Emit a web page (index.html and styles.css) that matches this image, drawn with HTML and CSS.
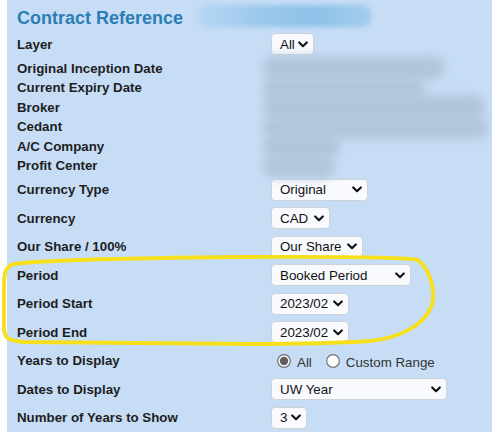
FILE: index.html
```html
<!DOCTYPE html>
<html lang="en">
<head>
<meta charset="utf-8">
<title>Contract Reference</title>
<link rel="stylesheet" href="styles.css">
</head>
<body>
<div class="page">
  <div class="panel">
    <div class="title-row">
      <h1 class="title">Contract Reference</h1>
      <span class="smudge-title"></span>
    </div>

    <div class="row row-sel">
      <div class="label">Layer</div>
      <div class="value"><div class="select w-all"><span>All</span><svg class="chev" viewBox="0 0 10 7" width="10" height="7"><path d="M1.2 1.4 L5 5.2 L8.8 1.4"/></svg></div></div>
    </div>
    <div class="row row-txt">
      <div class="label">Original Inception Date</div>
      <div class="value"><span class="smudge s-182"></span></div>
    </div>
    <div class="row row-txt">
      <div class="label">Current Expiry Date</div>
      <div class="value"><span class="smudge s-162"></span></div>
    </div>
    <div class="row row-txt">
      <div class="label">Broker</div>
      <div class="value"><span class="smudge s-222"></span></div>
    </div>
    <div class="row row-txt">
      <div class="label">Cedant</div>
      <div class="value"><span class="smudge s-225"></span></div>
    </div>
    <div class="row row-txt">
      <div class="label">A/C Company</div>
      <div class="value"><span class="smudge s-77"></span></div>
    </div>
    <div class="row row-txt">
      <div class="label">Profit Center</div>
      <div class="value"><span class="smudge s-72"></span></div>
    </div>

    <div class="row row-sel">
      <div class="label">Currency Type</div>
      <div class="value"><div class="select w-original"><span>Original</span><svg class="chev" viewBox="0 0 10 7" width="10" height="7"><path d="M1.2 1.4 L5 5.2 L8.8 1.4"/></svg></div></div>
    </div>
    <div class="row row-sel">
      <div class="label">Currency</div>
      <div class="value"><div class="select w-cad"><span>CAD</span><svg class="chev" viewBox="0 0 10 7" width="10" height="7"><path d="M1.2 1.4 L5 5.2 L8.8 1.4"/></svg></div></div>
    </div>
    <div class="row row-sel">
      <div class="label">Our Share / 100%</div>
      <div class="value"><div class="select w-share"><span>Our Share</span><svg class="chev" viewBox="0 0 10 7" width="10" height="7"><path d="M1.2 1.4 L5 5.2 L8.8 1.4"/></svg></div></div>
    </div>
    <div class="row row-sel">
      <div class="label">Period</div>
      <div class="value"><div class="select w-booked"><span>Booked Period</span><svg class="chev" viewBox="0 0 10 7" width="10" height="7"><path d="M1.2 1.4 L5 5.2 L8.8 1.4"/></svg></div></div>
    </div>
    <div class="row row-sel">
      <div class="label">Period Start</div>
      <div class="value"><div class="select w-date"><span>2023/02</span><svg class="chev" viewBox="0 0 10 7" width="10" height="7"><path d="M1.2 1.4 L5 5.2 L8.8 1.4"/></svg></div></div>
    </div>
    <div class="row row-sel">
      <div class="label">Period End</div>
      <div class="value"><div class="select w-date"><span>2023/02</span><svg class="chev" viewBox="0 0 10 7" width="10" height="7"><path d="M1.2 1.4 L5 5.2 L8.8 1.4"/></svg></div></div>
    </div>
    <div class="row row-sel">
      <div class="label">Years to Display</div>
      <div class="value">
        <div class="radios">
          <svg class="radio" viewBox="0 0 14 14" width="14" height="14"><circle cx="7" cy="7" r="6.3" fill="#fff" stroke="#6f6f6f" stroke-width="1.2"/><circle cx="7" cy="7" r="4.2" fill="#5f5f5f"/></svg>
          <span class="radio-text">All</span>
          <svg class="radio radio-2" viewBox="0 0 14 14" width="14" height="14"><circle cx="7" cy="7" r="6.3" fill="#fff" stroke="#767676" stroke-width="1.2"/></svg>
          <span class="radio-text">Custom Range</span>
        </div>
      </div>
    </div>
    <div class="row row-sel">
      <div class="label">Dates to Display</div>
      <div class="value"><div class="select w-uw"><span>UW Year</span><svg class="chev" viewBox="0 0 10 7" width="10" height="7"><path d="M1.2 1.4 L5 5.2 L8.8 1.4"/></svg></div></div>
    </div>
    <div class="row row-sel">
      <div class="label">Number of Years to Show</div>
      <div class="value"><div class="select w-3"><span>3</span><svg class="chev" viewBox="0 0 10 7" width="10" height="7"><path d="M1.2 1.4 L5 5.2 L8.8 1.4"/></svg></div></div>
    </div>
  </div>

  <svg class="annotation" viewBox="0 0 492 436" width="492" height="436">
    <path d="M 240 257 C 140 258, 40 260, 14 264 C 6 266, 4 272, 4 285 L 4 328 C 4 338, 8 341, 25 342 L 250 344 C 300 344, 340 343, 370 341 C 400 338, 425 325, 432 305 C 436 290, 430 270, 418 260 C 400 256, 300 257, 240 257 Z"/>
  </svg>
</div>
</body>
</html>
```

FILE: styles.css
```css
html, body {
  margin: 0;
  padding: 0;
  background: #ffffff;
}

.page {
  position: relative;
  width: 492px;
  height: 436px;
  padding-left: 7px;
  box-sizing: border-box;
  font-family: "Liberation Sans", Arial, sans-serif;
  overflow: hidden;
}

.panel {
  background: #c7ddf6;
  height: 432px;
  padding-left: 10px;
  box-sizing: border-box;
  overflow: hidden;
}

.title-row {
  display: flex;
  align-items: center;
  height: 30px;
  padding-top: 6px;
  box-sizing: border-box;
}

.title {
  margin: 0;
  font-size: 18px;
  line-height: 18px;
  font-weight: bold;
  color: #2b7db5;
}

.smudge-title {
  display: block;
  width: 175px;
  height: 22px;
  margin-left: 14px;
  margin-bottom: 4px;
  border-radius: 11px;
  background: linear-gradient(90deg, #b5d6f2 0%, #95c5ea 45%, #8fc1e8 70%, #a2cdee 100%);
  filter: blur(2.5px);
}

.row {
  display: flex;
  align-items: center;
}

.row-txt {
  height: 19.5px;
}

.row-sel {
  height: 28.5px;
}

.label {
  width: 254px;
  flex: none;
  font-size: 13.3px;
  font-weight: bold;
  color: #1e1e1e;
  white-space: nowrap;
}

.value {
  display: flex;
  align-items: center;
  flex: 1;
}

.select {
  height: 22px;
  box-sizing: border-box;
  border: 1px solid #cdd2d8;
  border-radius: 4px;
  background: #f8fafd;
  display: flex;
  align-items: center;
  justify-content: space-between;
  padding: 0 5px 0 8px;
  font-size: 13.33px;
  color: #111;
  white-space: nowrap;
}

.chev {
  flex: none;
  display: block;
}

.chev path {
  fill: none;
  stroke: #111;
  stroke-width: 2.1;
  stroke-linecap: round;
  stroke-linejoin: round;
}

.w-all { width: 43px; }
.w-original { width: 97px; }
.w-cad { width: 59px; }
.w-share { width: 92px; }
.w-booked { width: 140px; }
.w-date { width: 78px; }
.w-uw { width: 176px; }
.w-3 { width: 36px; }

.smudge {
  display: block;
  height: 24px;
  margin-left: -8px;
  border-radius: 12px;
  background: #b3c5da;
  filter: blur(4px);
}

.s-182 { width: 182px; }
.s-162 { width: 162px; }
.s-222 { width: 222px; }
.s-225 { width: 225px; }
.s-77 { width: 77px; }
.s-72 { width: 72px; }

.radios {
  display: flex;
  align-items: center;
  margin-left: 6px;
  font-size: 13.33px;
  color: #333;
}

.radio {
  display: block;
  flex: none;
}

.radio-2 {
  margin-left: 14px;
}

.radio-text {
  margin-left: 6px;
  padding-top: 3px;
}

.annotation {
  position: absolute;
  top: 0;
  left: 0;
  pointer-events: none;
}

.annotation path {
  fill: none;
  stroke: #f6e01c;
  stroke-width: 3.8;
  stroke-linecap: round;
  stroke-linejoin: round;
}
```
